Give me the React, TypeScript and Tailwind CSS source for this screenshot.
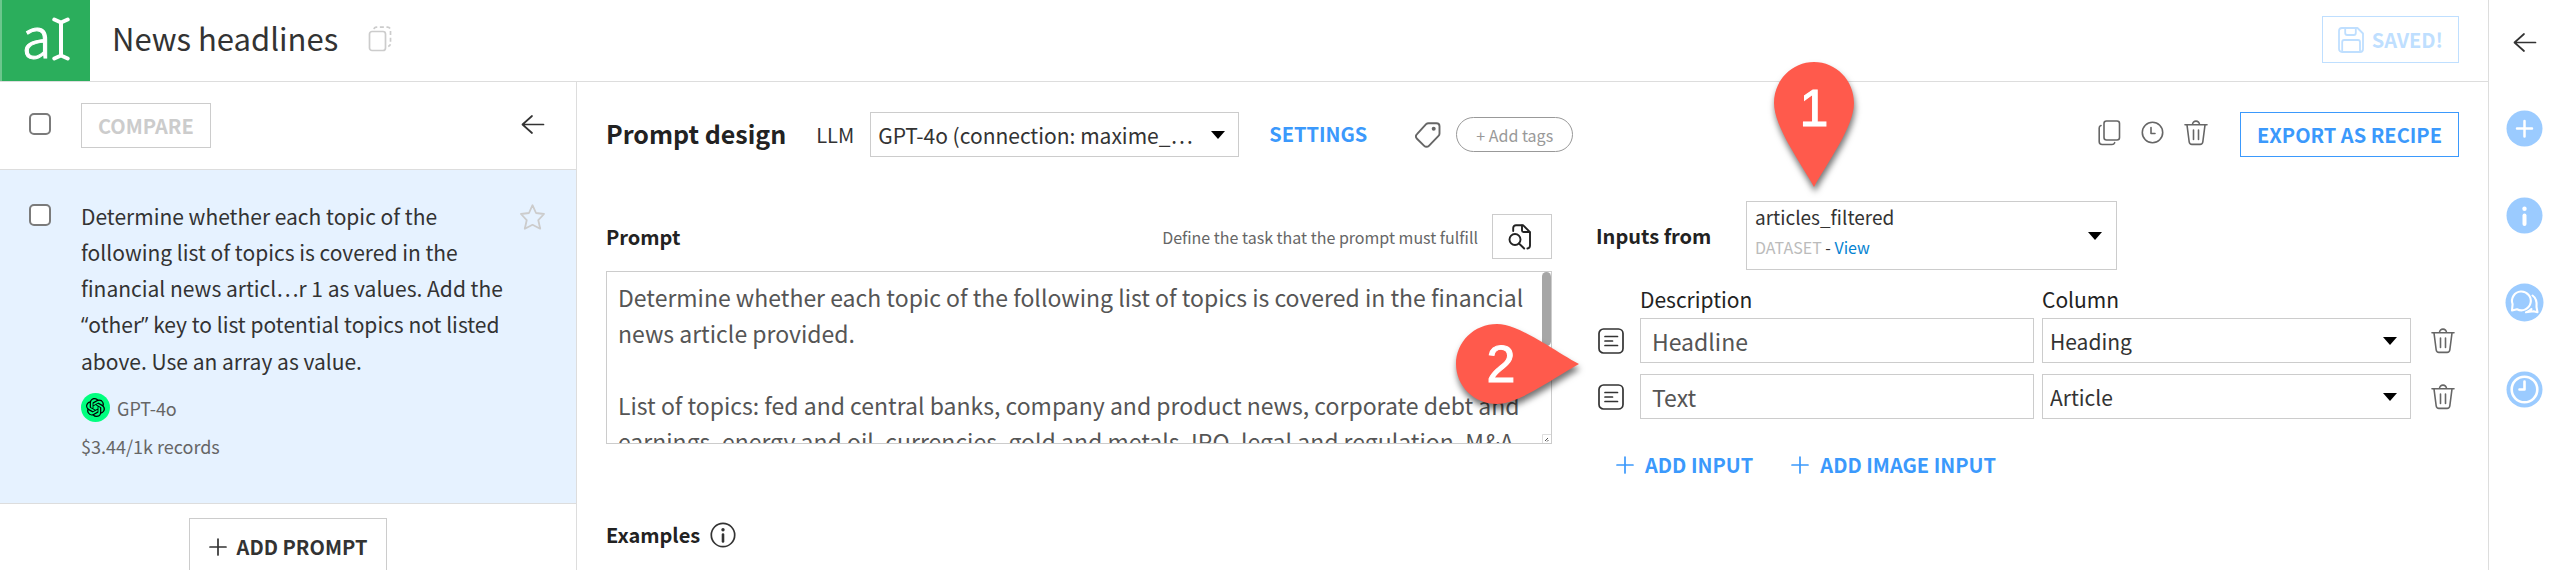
import type { ReactNode } from "react";
import { SiOpenai } from "react-icons/si";

const PROMPT_TEXT = `Determine whether each topic of the following list of topics is covered in the financial news article provided.

List of topics: fed and central banks, company and product news, corporate debt and earnings, energy and oil, currencies, gold and metals, IPO, legal and regulation, M&A,`;

function ArrowLeft({ className = "" }: { className?: string }) {
  return (
    <svg className={className} width="24" height="24" viewBox="0 0 24 24" fill="none" stroke="currentColor" strokeWidth="1.7" strokeLinecap="round" strokeLinejoin="round" aria-hidden="true">
      <path d="M22.5 12.5H1.5M11 4L1.5 12.5L11 21" />
    </svg>
  );
}

function DuplicateIcon() {
  return (
    <svg width="24" height="26" viewBox="0 0 24 26" fill="none" stroke="currentColor" strokeWidth="1.7" aria-hidden="true">
      <rect x="1.5" y="5.5" width="16" height="19" rx="2.5" />
      <path d="M6 3.2a2.6 2.6 0 0 1 2.6-2.1H19.5a3 3 0 0 1 3 3V17.5a3 3 0 0 1-2.3 2.9" strokeDasharray="4 2.6" />
    </svg>
  );
}

function CopyIcon() {
  return (
    <svg width="23" height="26" viewBox="0 0 23 26" fill="none" stroke="currentColor" strokeWidth="1.6" strokeLinecap="round" aria-hidden="true">
      <rect x="6" y="1" width="15.5" height="19" rx="2.5" />
      <path d="M3 5.5a2.5 2.5 0 0 0-1.8 2.500V21.5a3 3 0 0 0 3 3H14a3 3 0 0 0 2.7-1.8" />
    </svg>
  );
}

function HistoryIcon() {
  return (
    <svg width="23" height="23" viewBox="0 0 23 23" fill="none" stroke="currentColor" strokeWidth="1.6" strokeLinecap="round" strokeLinejoin="round" aria-hidden="true">
      <circle cx="11.5" cy="11.5" r="10.2" />
      <path d="M10 6.5V12.5H14" />
    </svg>
  );
}

function TrashIcon() {
  return (
    <svg width="24" height="26" viewBox="0 0 24 26" fill="none" stroke="currentColor" strokeWidth="1.6" strokeLinecap="round" strokeLinejoin="round" aria-hidden="true">
      <path d="M1 4.8H23M8.5 4.6a3.500 3.500 0 0 1 7 0M3 5L5.2 22a2.8 2.8 0 0 0 2.8 2.400H16a2.8 2.8 0 0 0 2.8-2.400L21 5M9.500 10V19.500M14.500 10V19.500" />
    </svg>
  );
}

function TagIcon() {
  return (
    <svg width="26" height="26" viewBox="0 0 26 26" fill="none" stroke="currentColor" strokeWidth="1.9" strokeLinejoin="round" aria-hidden="true">
      <path d="M13.5 1.2H21.5a3 3 0 0 1 3 3V11.5a3.4 3.4 0 0 1-1 2.4L13.9 23.8a3.3 3.3 0 0 1-4.7 0L2 16.7a3.3 3.3 0 0 1 0-4.6L11.1 2.2a3.4 3.4 0 0 1 2.4-1z" />
      <circle cx="18.7" cy="6.8" r="2" fill="currentColor" stroke="none" />
    </svg>
  );
}

function SearchDocIcon() {
  return (
    <svg width="24" height="26" viewBox="0 0 24 26" fill="none" stroke="currentColor" strokeWidth="1.9" strokeLinecap="round" strokeLinejoin="round" aria-hidden="true">
      <path d="M5.2 7V4a2.8 2.8 0 0 1 2.8-2.8H15L22 8.2V21.5a3 3 0 0 1-2.6 3" />
      <path d="M14 1.5V6.5a1.5 1.5 0 0 0 1.5 1.5H21.5" />
      <circle cx="7" cy="15.5" r="5.5" />
      <path d="M11 19.5L16.2 24.5" />
    </svg>
  );
}

function TextTypeIcon() {
  return (
    <svg width="26" height="26" viewBox="0 0 26 26" fill="none" stroke="currentColor" strokeWidth="1.7" strokeLinecap="round" aria-hidden="true">
      <rect x="1" y="1" width="24" height="24" rx="4.5" />
      <path d="M7 8.5H19.5M7 13H14.5M7 17.5H19.5" />
    </svg>
  );
}

function InfoOutlineIcon() {
  return (
    <svg width="26" height="26" viewBox="0 0 26 26" fill="none" stroke="currentColor" strokeWidth="1.7" aria-hidden="true">
      <circle cx="13" cy="13" r="11.7" />
      <circle cx="13" cy="7.8" r="1.7" fill="currentColor" stroke="none" />
      <path d="M13 12.5V19.5" strokeWidth="2.6" strokeLinecap="round" />
    </svg>
  );
}

function SaveIcon() {
  return (
    <svg width="26" height="26" viewBox="0 0 26 26" fill="none" stroke="currentColor" strokeWidth="1.8" strokeLinejoin="round" aria-hidden="true">
      <path d="M4 1H19.5L25 6.5V22a3 3 0 0 1-3 3H4a3 3 0 0 1-3-3V4a3 3 0 0 1 3-3z" />
      <path d="M7.2 1V6a2 2 0 0 0 2 2H15.8a2 2 0 0 0 2-2V1M4.2 25V15a2 2 0 0 1 2-2H20a2 2 0 0 1 2 2V25" />
    </svg>
  );
}

function PlusIcon() {
  return (
    <svg width="18" height="18" viewBox="0 0 18 18" fill="none" stroke="currentColor" strokeWidth="1.7" strokeLinecap="round" aria-hidden="true">
      <path d="M9 1V17M1 9H17" />
    </svg>
  );
}

function StarIcon() {
  return (
    <svg width="25" height="26" viewBox="0 0 25 26" fill="none" stroke="currentColor" strokeWidth="1.8" strokeLinejoin="round" aria-hidden="true">
      <path d="M12.5 1.2L16 9l8 1-5.7 6.2 1.9 8.5-7.7-3.9-7.7 3.9 1.9-8.5L1 10l8-1z" />
    </svg>
  );
}

function Caret() {
  return (
    <svg className="pointer-events-none absolute top-1/2 right-3.5 -translate-y-1/2" width="14" height="8" viewBox="0 0 14 8" aria-hidden="true">
      <path d="M0 0H14L7 8z" fill="#000" />
    </svg>
  );
}

function Pin({ direction, children }: { direction: "down" | "right"; children: ReactNode }) {
  const down = direction === "down";
  return (
    <div className={down ? "absolute -top-[140px] left-[27px] z-10 h-[125px] w-20" : "absolute top-[53px] -right-[27px] z-10 h-20 w-[123px]"}>
      <svg
        className="absolute inset-0 overflow-visible drop-shadow-[1px_5px_3px_rgba(0,0,0,0.55)]"
        width={down ? 80 : 123}
        height={down ? 125 : 80}
        viewBox={down ? "0 0 80 125" : "0 0 123 80"}
        aria-hidden="true"
      >
        <path
          fill="#ff5a4c"
          d={
            down
              ? "M40 0C62 0 80 18 80 41C80 65 53 101 40 125C27 101 0 65 0 41C0 18 18 0 40 0z"
              : "M0 40C0 18 18 0 41 0C63 0 99 27 123 40C99 53 63 80 41 80C18 80 0 62 0 40z"
          }
        />
      </svg>
      <span
        className={
          down
            ? "relative block w-20 pt-[18px] text-center font-['Liberation_Sans',sans-serif] text-[52px] leading-[56px] text-white [-webkit-text-stroke:1px_white]"
            : "relative block w-[90px] pt-3 text-center font-['Liberation_Sans',sans-serif] text-[52px] leading-[56px] text-white [-webkit-text-stroke:1px_white]"
        }
      >
        {children}
      </span>
    </div>
  );
}

const checkbox = "size-[22px] shrink-0 appearance-none rounded-[5px] border-2 border-[#7b7b7b] bg-white";

function Sidebar() {
  return (
    <aside className="w-[577px] shrink-0 border-r border-[#dddddd]">
      <div className="flex h-[88px] items-center border-b border-[#dddddd] pr-[31px] pl-[29px]">
        <input type="checkbox" aria-label="Select all prompts" className={`mb-1 ${checkbox}`} />
        <button type="button" className="ml-[30px] h-[45px] border border-[#cccccc] px-4 text-xl leading-[30px] font-bold text-[#cccccc]">
          COMPARE
        </button>
        <button type="button" aria-label="Collapse list" className="mb-1 ml-auto">
          <ArrowLeft />
        </button>
      </div>
      <article className="flex items-start border-b border-[#dddddd] bg-[#e6f2ff] pr-[31px] pb-[44px] pl-[29px]">
        <input type="checkbox" aria-label="Select prompt" className={`mt-[34px] ${checkbox}`} />
        <div className="ml-[30px] flex-1 pt-7">
          <p className="text-[21px] leading-9">
            Determine whether each topic of the following list of topics is covered in the financial news articl…r 1 as values. Add the{" "}
            <span className="font-['Open_Sans',sans-serif]">“</span>other<span className="font-['Open_Sans',sans-serif]">”</span> key to list potential topics not listed above. Use an array as value.
          </p>
          <div className="mt-3.5 flex items-center gap-[7px] text-lg leading-[26px] text-[#666666]">
            <span className="grid size-[29px] place-items-center rounded-full bg-[#00ff7f] text-black">
              <SiOpenai size={19} />
            </span>
            GPT-4o
          </div>
          <p className="mt-[11px] text-lg leading-[26px] text-[#666666]">$3.44/1k records</p>
        </div>
        <button type="button" aria-label="Add to favorites" className="mt-[34px] ml-2 text-[#cccccc]">
          <StarIcon />
        </button>
      </article>
      <div className="flex justify-center pt-3.5">
        <button type="button" className="flex h-[58px] items-center gap-2.5 border border-[#cccccc] px-[19px] text-xl leading-[30px] font-bold">
          <PlusIcon />
          ADD PROMPT
        </button>
      </div>
    </aside>
  );
}

function Toolbar() {
  return (
    <div className="flex items-center">
      <h2 className="pb-1 text-[25px] leading-9 font-bold text-[#222222]">Prompt design</h2>
      <label htmlFor="llm" className="ml-[30px] text-xl leading-[30px]">LLM</label>
      <div className="relative ml-4 w-[369px]">
        <select id="llm" className="h-[45px] w-full appearance-none border border-[#cccccc] bg-white pl-[7px] text-[21px] leading-[30px]">
          <option>GPT-4o (connection: maxime_…</option>
        </select>
        <Caret />
      </div>
      <button type="button" className="ml-[30px] pb-0.5 text-xl leading-[30px] font-bold text-[#3b99fc]">SETTINGS</button>
      <span className="ml-12 text-[#666666]"><TagIcon /></span>
      <button type="button" className="ml-[15px] h-[35px] rounded-full border border-[#999999] px-[19px] text-base leading-6 text-[#999999]">
        + Add tags
      </button>
      <div className="ml-auto flex items-center gap-5 pb-1 text-[#666666]">
        <button type="button" aria-label="Duplicate"><CopyIcon /></button>
        <button type="button" aria-label="History"><HistoryIcon /></button>
        <button type="button" aria-label="Delete"><TrashIcon /></button>
      </div>
      <button type="button" className="ml-8 h-[45px] border border-[#3b99fc] px-4 text-xl leading-[30px] font-bold text-[#3b99fc]">
        EXPORT AS RECIPE
      </button>
    </div>
  );
}

function PromptEditor() {
  return (
    <section className="pt-[13px]">
      <div className="flex items-center">
        <label htmlFor="prompt" className="text-xl leading-[30px] font-bold text-[#222222]">Prompt</label>
        <span className="ml-auto text-base leading-6 text-[#666666]">Define the task that the prompt must fulfill</span>
        <button type="button" aria-label="Preview prompt" className="ml-3.5 grid h-[45px] w-[60px] place-items-center border border-[#cccccc] pr-1 text-[#222222]">
          <SearchDocIcon />
        </button>
      </div>
      <div className="relative mt-3">
        <textarea
          id="prompt"
          defaultValue={PROMPT_TEXT}
          className="block h-[173px] w-full resize-none overflow-hidden border border-[#cccccc] bg-white py-[7px] pr-[18px] pl-[11px] text-[23px] leading-9 text-[#555555]"
        />
        <div className="absolute top-px right-px h-[74px] w-[9px] rounded-full bg-[#a6a6a6]" />
        <svg className="absolute right-px bottom-px" width="9" height="9" viewBox="0 0 9 9" fill="none" aria-hidden="true">
          <path d="M.5 9V.5H9" stroke="#dddddd" />
          <path d="M3 7L6 4M5 7.5L6.5 6" stroke="#555555" />
        </svg>
        <Pin direction="right">2</Pin>
      </div>
      <div className="mt-[78px] flex items-center gap-2.5">
        <h3 className="text-xl leading-[26px] font-bold text-[#222222]">Examples</h3>
        <InfoOutlineIcon />
      </div>
    </section>
  );
}

function InputRow({ id, description, column }: { id: string; description: string; column: string }) {
  return (
    <>
      <span className="pl-0.5"><TextTypeIcon /></span>
      <input
        aria-labelledby="description-heading"
        defaultValue={description}
        className="h-[45px] w-full min-w-0 border border-[#cccccc] bg-white px-[11px] text-[23px] leading-9 text-[#555555]"
      />
      <div className="relative">
        <select id={id} aria-labelledby="column-heading" className="h-[45px] w-full appearance-none border border-[#cccccc] bg-white pl-[7px] text-[21px] leading-[30px]">
          <option>{column}</option>
        </select>
        <Caret />
      </div>
      <button type="button" aria-label={`Remove ${description}`} className="justify-self-end pr-1 text-[#666666]">
        <TrashIcon />
      </button>
    </>
  );
}

function InputsPanel() {
  return (
    <section>
      <div className="flex items-center">
        <label htmlFor="dataset" className="w-[150px] text-xl leading-[30px] font-bold text-[#222222]">Inputs from</label>
        <div className="relative w-[371px] border border-[#cccccc] pb-[7px]">
          <select id="dataset" className="block h-[30px] w-full appearance-none bg-white pl-2 text-[19px] leading-[30px]">
            <option>articles_filtered</option>
          </select>
          <p className="pl-2 text-base leading-[30px]">
            <span className="text-[#bbbbbb]">DATASET</span> - <a href="#view" className="text-[#0583d2]">View</a>
          </p>
          <Caret />
          <Pin direction="down">1</Pin>
        </div>
      </div>
      <div className="mt-3.5 grid grid-cols-[36px_394fr_369fr_40px] gap-x-2 text-[21px] leading-[30px] text-[#222222]">
        <span id="description-heading" className="col-start-2">Description</span>
        <span id="column-heading">Column</span>
      </div>
      <div className="mt-1 grid grid-cols-[36px_394fr_369fr_40px] items-center gap-x-2 gap-y-[11px]">
        <InputRow id="column-heading-field" description="Headline" column="Heading" />
        <InputRow id="column-text-field" description="Text" column="Article" />
      </div>
      <div className="mt-[31px] flex gap-[38px] pl-5 text-xl leading-[30px] font-bold text-[#3b99fc]">
        <button type="button" className="flex items-center gap-[11px]"><PlusIcon />ADD INPUT</button>
        <button type="button" className="flex items-center gap-[11px]"><PlusIcon />ADD IMAGE INPUT</button>
      </div>
    </section>
  );
}

function RightRail() {
  return (
    <nav className="flex w-[72px] shrink-0 flex-col items-center border-l border-[#dddddd] pt-[30px]">
      <button type="button" aria-label="Open panel"><ArrowLeft /></button>
      <div className="mt-14 flex flex-col gap-[50px] text-[#9bcbff]">
        <button type="button" aria-label="Add">
          <svg width="37" height="37" viewBox="0 0 37 37" aria-hidden="true">
            <circle cx="18.5" cy="18.5" r="18" fill="currentColor" />
            <path d="M18.5 11V26.5M11 18.5H26" stroke="#fff" strokeWidth="2.5" strokeLinecap="round" />
          </svg>
        </button>
        <button type="button" aria-label="Details">
          <svg width="37" height="37" viewBox="0 0 37 37" aria-hidden="true">
            <circle cx="18.5" cy="18.5" r="18" fill="currentColor" />
            <circle cx="18.5" cy="11.8" r="2.2" fill="#fff" />
            <path d="M18.5 18.5V27" stroke="#fff" strokeWidth="4" strokeLinecap="round" />
          </svg>
        </button>
        <button type="button" aria-label="Discussions">
          <svg width="37" height="37" viewBox="0 0 37 37" className="overflow-visible" fill="none" stroke="#fff" strokeWidth="2.1" strokeLinecap="round" strokeLinejoin="round" aria-hidden="true">
            <circle cx="18.5" cy="18.5" r="19" fill="currentColor" stroke="none" />
            <path d="M6.6 20.2L6 26.5L11 25.2A9.4 9.4 0 1 0 6.6 20.2z" />
            <path d="M26.5 11.5Q31.500 15 30.5 23L31.5 28.300L27.5 27.300L20 28.300Q23.500 27.500 25.500 25" />
          </svg>
        </button>
        <button type="button" aria-label="Timeline">
          <svg width="37" height="37" viewBox="0 0 37 37" fill="none" stroke="#fff" strokeWidth="2.6" strokeLinecap="round" strokeLinejoin="round" aria-hidden="true">
            <circle cx="18.5" cy="18.5" r="18" fill="currentColor" stroke="none" />
            <circle cx="18.5" cy="18.5" r="12.8" />
            <path d="M18.5 10.5V18.5H13.5" />
          </svg>
        </button>
      </div>
    </nav>
  );
}

export default function App() {
  return (
    <div className="flex h-screen overflow-hidden bg-white font-['Noto_Sans_CJK_SC',sans-serif] text-[#333333]">
      <div className="flex min-w-0 flex-1 flex-col">
        <header className="flex h-[82px] shrink-0 items-center border-b border-[#dddddd] pr-[29px]">
          <div className="flex h-full w-[90px] items-center justify-center gap-px border-l-2 border-[#6cc68d] bg-[#2bae5c] text-white">
            <span className="pb-3 text-[54px] leading-[60px] font-light [-webkit-text-stroke:1px_white]">a</span>
            <svg width="18" height="44" viewBox="0 0 18 44" className="mb-1" fill="none" stroke="currentColor" strokeWidth="4" strokeLinecap="round" strokeLinejoin="round" aria-hidden="true">
              <path d="M2.3 2.5L9 5.5L15.7 2.5M9 5.5V38.5M2.3 41.5L9 38.5L15.7 41.5" />
            </svg>
          </div>
          <h1 className="ml-[22px] pb-1.5 text-[31px] leading-10">News headlines</h1>
          <button type="button" aria-label="Copy title" className="ml-[30px] pb-1 text-[#cccccc]"><DuplicateIcon /></button>
          <button type="button" className="mb-0.5 ml-auto flex h-[47px] items-center gap-2 border border-[#bfdfff] px-[15px] text-xl leading-[30px] font-bold text-[#bfdfff]">
            <SaveIcon />
            SAVED!
          </button>
        </header>
        <div className="flex min-h-0 flex-1">
          <Sidebar />
          <main className="min-w-0 flex-1 px-[29px] pt-[30px]">
            <Toolbar />
            <div className="mt-11 grid grid-cols-[minmax(0,946fr)_minmax(0,863fr)] gap-11">
              <PromptEditor />
              <InputsPanel />
            </div>
          </main>
        </div>
      </div>
      <RightRail />
    </div>
  );
}
